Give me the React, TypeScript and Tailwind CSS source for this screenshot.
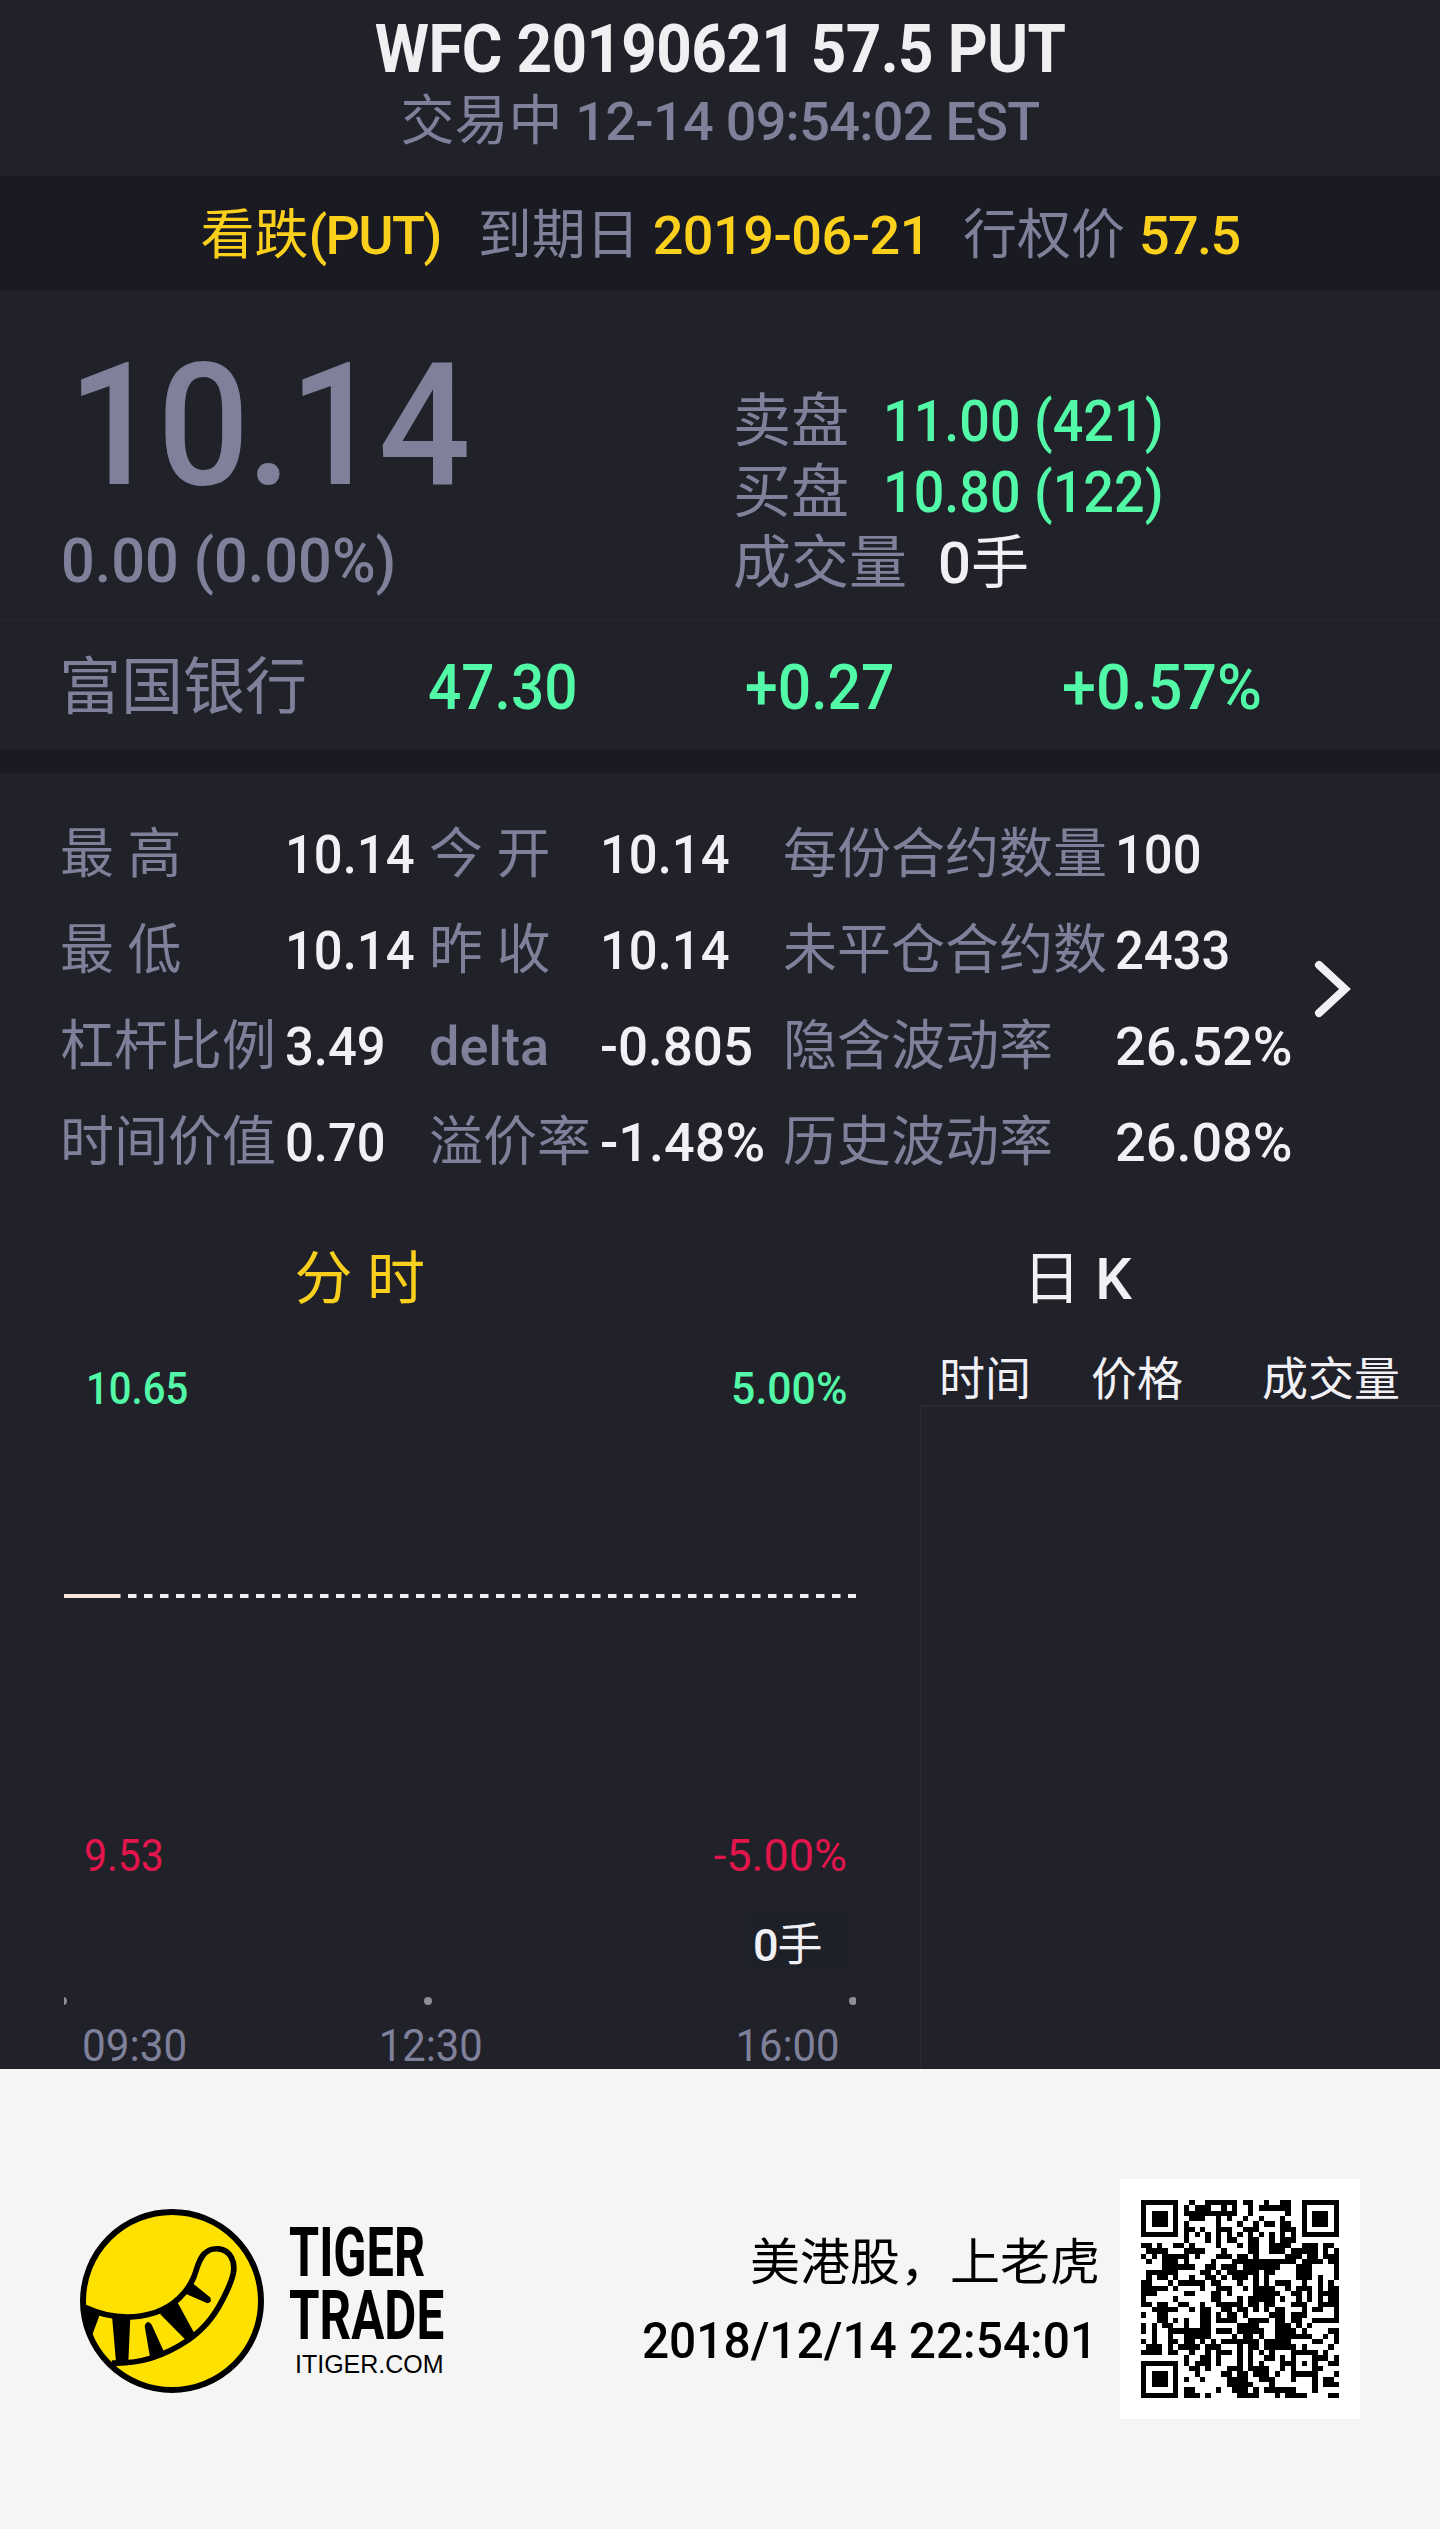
import React from "react";

const quoteStats = [
  ["最 高", "10.14", "今 开", "10.14", "每份合约数量", "100"],
  ["最 低", "10.14", "昨 收", "10.14", "未平仓合约数", "2433"],
  ["杠杆比例", "3.49", "delta", "-0.805", "隐含波动率", "26.52%"],
  ["时间价值", "0.70", "溢价率", "-1.48%", "历史波动率", "26.08%"],
];

const qrRows = [
  "#######..#..######.##..#..##..#######",
  "#.....#.#.###..#.#..#.######..#.....#",
  "#.###.#.##########..#......#..#.###.#",
  "#.###.#..###..#.#..#..#...#...#.###.#",
  "#.###.#.#.....#...#..#.##.##..#.###.#",
  "#.....#.##.#..###..###....###.#.....#",
  "#######.#.#.#.#.#.#.#.#.#.#.#.#######",
  "........#...#.#.##..##..#.###........",
  "##.#..##.#....#...#.##..####..###.##.",
  ".####...####...#....##..###.#####.#.#",
  "#.#.#####.#...###.##.#.....###.##.###",
  ".#..###.#....#...############.####.##",
  "....######..##.###.#######...###....#",
  ".######....##.#.######.##....###....#",
  ".#.##.#..#..##.#.###.#.#.....###.#..#",
  "##...#.#####.##...#..#.#.###..#..#.#.",
  "#####.#....#..###..#.####..#.###.#.##",
  "###.....##...##.#....#####..##.#.####",
  "#.....#......##...#.#####.#..#.#.#.##",
  "##.##..##..#..#####.##.##...###..####",
  "..#####..#.##..##.##.#.#.##...#.##..#",
  "#..##......##.#.##.#....###.###.....#",
  "...##.#.#..##.####..####.##.##..#####",
  "#.#.##..#..##.....####...###.#.#.....",
  "#.#..########.###.#####..####.#....##",
  "..#..#..#####....#.##.#..#######..#.#",
  "#.#..##.##.#.#.#######.#####....##..#",
  ".###.#.####.###...#.##.######.#....#.",
  "####.##..#..#.###.#.#.#.#...#####.#..",
  "........#..##.#...#.#..##.#.#...###.#",
  "#######.#.###.#...#.#.#...###.#.#..##",
  "#.....#..##.#...###.####..#.#...##...",
  "#.###.#...#....##.##.###.#..#####...#",
  "#.###.#.#..#....####..###...#...#.##.",
  "#.###.#.........#####...#.......#.###",
  "#.....#.##....#..###.#.######...#....",
  "#######.###.#.....####...#.####....##",
];

export default function App() {
  return (
    <div className="w-[1440px] h-[2529px] overflow-hidden bg-[#21212a] text-[#7f809a] font-medium whitespace-nowrap font-[Roboto,'Noto_Sans_CJK_SC',sans-serif]">
      <header className="h-[176px] text-center">
        <h1 className="text-[67px] leading-[98px] font-bold text-[#f0f0f2] tracking-[-0.7px] scale-x-[0.926]">WFC 20190621 57.5 PUT</h1>
        <p className="text-[54px] leading-[47px]">
          <Cjk>交易中</Cjk><span className="tracking-[-0.7px]"> 12-14 09:54:02 EST</span>
        </p>
      </header>

      <div className="h-[114px] bg-[#1a1a22] flex justify-center text-[54px] leading-[119px]">
        <p className="text-[#fbd01d]"><Cjk>看跌</Cjk><span className="tracking-[-1.6px]">(PUT)</span></p>
        <p className="ml-[37px]"><Cjk>到期日</Cjk></p>
        <p className="ml-[13px] text-[#fbd01d] tracking-[-0.5px]">2019-06-21</p>
        <p className="ml-[33px]"><Cjk>行权价</Cjk></p>
        <p className="ml-[14px] text-[#fbd01d] tracking-[-1.6px]">57.5</p>
      </div>

      <section className="h-[330px] flex border-b border-[#282831]">
        <div className="w-[733px] pl-[61px] pt-[86px]">
          <p className="pl-[7px] text-[171px] leading-[100px] tracking-[-3px] origin-left scale-x-[0.95]">10.14</p>
          <p className="text-[62px] leading-[60px] mt-[55px] origin-left scale-x-[0.958]">0.00 (0.00%)</p>
        </div>
        <div className="pt-[96px] text-[58px] leading-[71px]">
          <BookRow label="卖盘" value="11.00 (421)" />
          <BookRow label="买盘" value="10.80 (122)" />
          <p className="flex">
            <Cjk>成交量</Cjk>
            <span className="ml-[31px] text-[#f1f1f5]">0<Cjk>手</Cjk></span>
          </p>
        </div>
      </section>

      <section className="h-[129px] flex text-[63px] leading-[135px] text-[#52f9a6]">
        <p className="w-[428px] pl-[59px] text-[62px] text-[#7f809a]"><Cjk>富国银行</Cjk></p>
        <p className="w-[317px] origin-left scale-x-[0.93]">47.30</p>
        <p className="w-[317px] origin-left scale-x-[0.935]">+0.27</p>
        <p className="origin-left scale-x-[0.97]">+0.57%</p>
      </section>

      <div className="h-6 bg-[#1a1a22]" />

      <section className="relative h-[418px] pt-[34px] text-[54px] leading-[96px]">
        {quoteStats.map((row) => (
          <div key={row[0]} className="grid grid-cols-[225px_144px_171px_183px_332px_1fr] pl-[60px]">
            {row.map((cell, i) => {
              if (i % 2 === 0) {
                return cell === "delta" ? <span key={i}>{cell}</span> : <Cjk key={i}>{cell}</Cjk>;
              }
              // values with a percent sign keep their full width
              const scale = cell.endsWith("%") ? "" : cell.startsWith("-") ? "scale-x-[0.98]" : "scale-x-[0.94]";
              return (
                <span key={i} className={`origin-left text-[#f1f1f5] ${scale}`}>{cell}</span>
              );
            })}
          </div>
        ))}
        <svg className="absolute left-[1311px] top-[184px]" width="42" height="64" fill="none" stroke="#f1f1f5" strokeWidth="8" strokeLinecap="round">
          <path d="M8 8 L34 32 L8 56" />
        </svg>
      </section>

      <nav className="mt-[38px] h-[100px] flex text-[58px] leading-[100px] text-center">
        <p className="w-[720px] pl-[5px] text-[#fbd01d]"><Cjk>分 时</Cjk></p>
        <p className="w-[731px] text-[#f1f1f5]"><Cjk>日</Cjk> K</p>
      </nav>

      <section className="h-[740px] flex">
        <div className="w-[920px] pl-16 pt-[37px]">
          <div className="flex justify-between pl-[22px] w-[783px] text-[45px] leading-[45px] text-[#52f9a6]">
            <span className="origin-left scale-x-[0.89]">10.65</span>
            <span className="origin-right scale-x-[0.95]">5.00%</span>
          </div>
          <svg className="block mt-[183px]" width="792" height="4">
            <path d="M0 2 H792" stroke="#f1f1f5" strokeWidth="4" strokeDasharray="8.5 7.5" />
            <path d="M0 2 H56" stroke="#f8e8da" strokeWidth="4" />
          </svg>
          <div className="mt-[235px] flex justify-between pl-[20px] w-[783px] text-[45px] leading-[45px] text-[#e2154c] font-normal">
            <span className="origin-left scale-x-[0.91]">9.53</span>
            <span>-5.00%</span>
          </div>
          <div className="mt-[34px] ml-[686px] w-[97px] h-[56px] pl-[3px] bg-[#1e2027] text-[45px] leading-[67px] text-[#f1f1f5] tracking-[-1px]">0<Cjk>手</Cjk></div>
          <svg className="block mt-[29px]" width="792" height="8" fill="#8d8e99">
            <circle cx="-1" cy="4" r="4" />
            <circle cx="364" cy="4" r="4" />
            <circle cx="789" cy="4" r="4" />
          </svg>
          <div className="mt-[19px] flex justify-between pl-[18px] w-[776px] text-[44px] leading-[44px] font-normal">
            <span className="origin-left scale-x-[0.96]">09:30</span>
            <span className="mr-[60px] scale-x-[0.95]">12:30</span>
            <span className="origin-right scale-x-[0.95]">16:00</span>
          </div>
        </div>
        <div className="flex-1 flex flex-col text-[46px]">
          <div className="h-[76px] pt-[24px] pl-[19px] flex leading-[52px] text-[#f1f1f5]">
            <p className="w-[152px]"><Cjk>时间</Cjk></p>
            <p className="w-[171px]"><Cjk>价格</Cjk></p>
            <p><Cjk>成交量</Cjk></p>
          </div>
          <div className="flex-1 border-t-2 border-l border-[#2a2a33]" />
        </div>
      </section>

      <footer className="h-[460px] bg-[#f5f5f5] text-black flex pl-20">
        <TigerLogo />
        <div className="w-[336px] pl-[25px] pt-[152px]">
          <p className="text-[69px] leading-[63px] font-bold origin-left scale-x-[0.705]">TIGER</p>
          <p className="text-[69px] leading-[63px] font-bold origin-left scale-x-[0.715]">TRADE</p>
          <p className="mt-[3px] pl-[6px] text-[25px] leading-[28px] font-normal font-['Liberation_Sans',sans-serif]">ITIGER.COM</p>
        </div>
        <div className="w-[500px] pt-[155px] text-right text-[50px] leading-[78px]">
          <p><Cjk>美港股，上老虎</Cjk></p>
          <p className="pr-[3px] origin-right scale-x-[0.957]">2018/12/14 22:54:01</p>
        </div>
        <div className="mt-[110px] ml-5 w-[240px] h-[240px] bg-white p-[21px]">
          <svg width="198" height="198" viewBox="0 0 37 37" shapeRendering="crispEdges">
            {qrRows.map((row, y) =>
              row.split("").map((c, x) => (c === "#" ? <rect key={`${x}-${y}`} x={x} y={y} width="1" height="1" /> : null))
            )}
          </svg>
        </div>
      </footer>
    </div>
  );
}

const Cjk = ({ children }: { children: React.ReactNode }) => <span className="font-normal">{children}</span>;

const BookRow = ({ label, value }: { label: string; value: string }) => (
  <p className="flex">
    <Cjk>{label}</Cjk>
    <span className="ml-[34px] text-[#52f9a6] origin-left scale-x-[0.93]">{value}</span>
  </p>
);

const TigerLogo = () => (
  <svg className="mt-[140px] shrink-0" width="184" height="184" viewBox="60 87 552 552">
    <circle cx="336" cy="363" r="267" fill="#ffe100" stroke="#000" strokeWidth="18" />
    {/* tail */}
    <path
      d="M75 382 C140 412 215 420 285 398 C340 380 382 338 402 290 C414 256 416 240 432 222 C456 198 498 202 514 232 C530 262 518 295 502 330 C470 400 440 440 385 480 C310 530 240 552 155 549"
      fill="none"
      stroke="#000"
      strokeWidth="17"
    />
    {/* stripes */}
    <path d="M68 374 L120 402 L97 464 L78 450 Z" />
    <path d="M156 408 L211 412 L205 546 L168 546 Z" />
    <path d="M254 438 Q262 416 275 434 L314 520 L270 532 Z" />
    <path d="M300 402 L352 366 L403 460 L375 478 Z" />
    <path d="M370 338 L396 308 L450 352 Q458 368 442 370 Z" />
  </svg>
);
